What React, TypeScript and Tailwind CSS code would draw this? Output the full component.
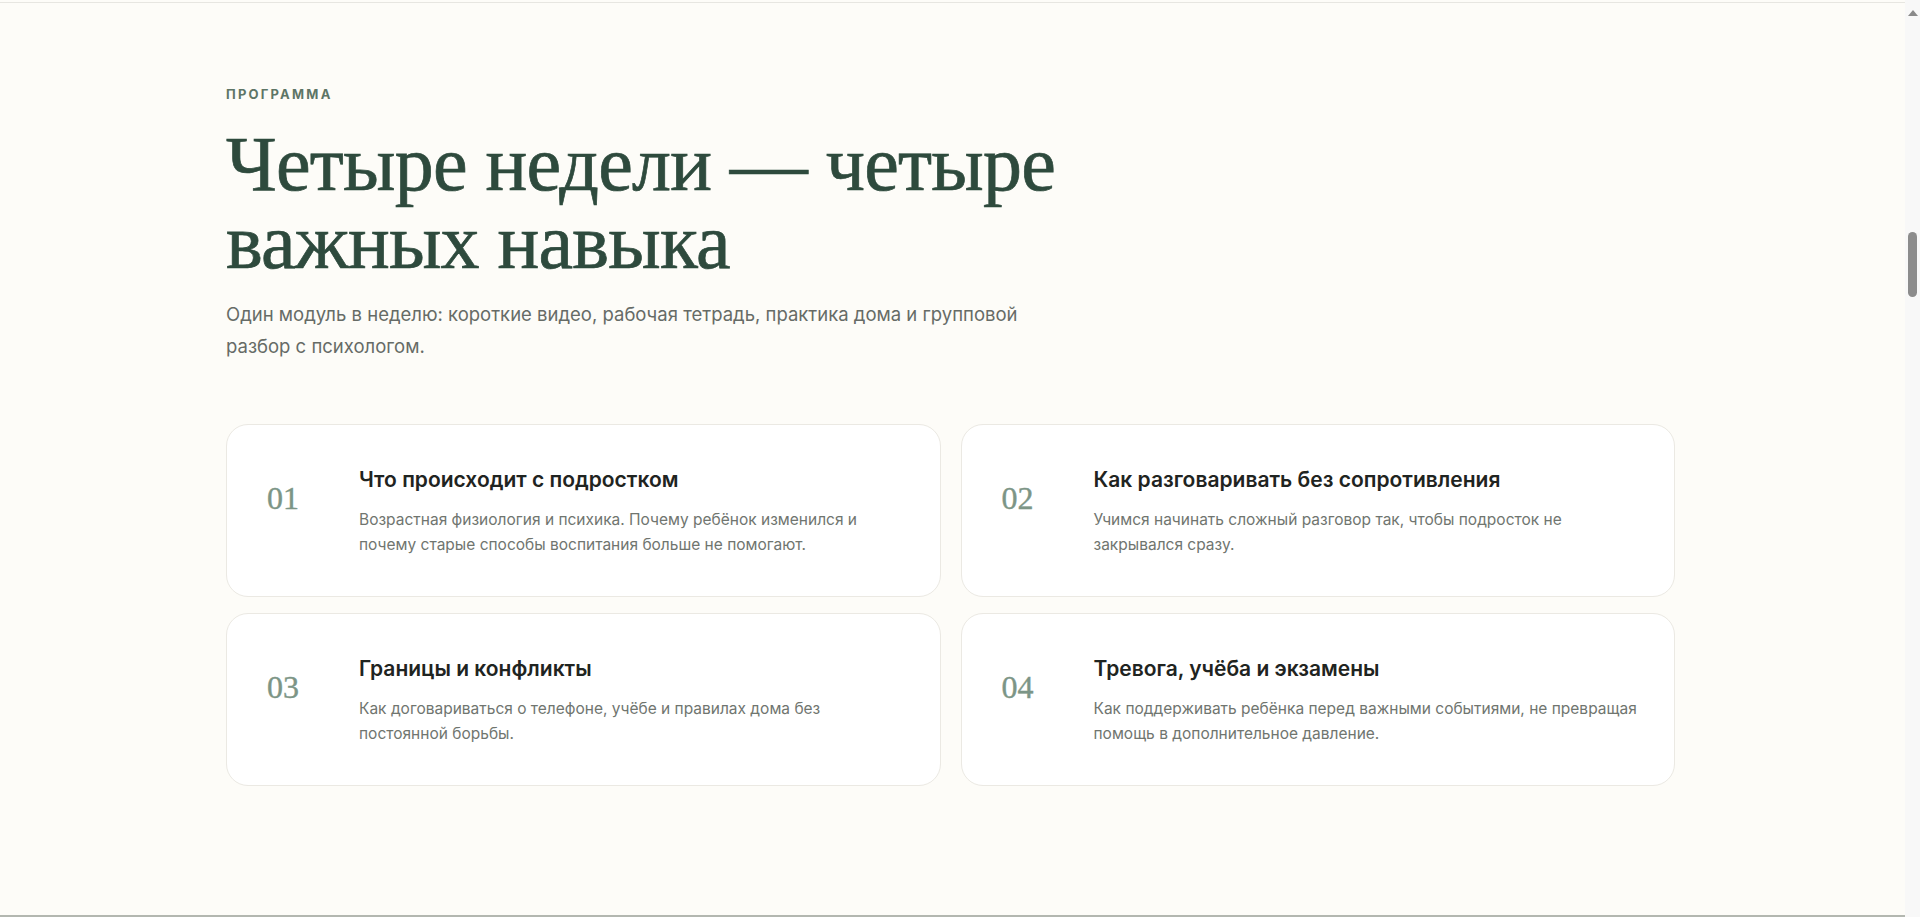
import React from 'react';

type Module = {
    num: string;
    title: string;
    text: string;
};

const modules: Module[] = [
    {
        num: '01',
        title: 'Что происходит с подростком',
        text: 'Возрастная физиология и психика. Почему ребёнок изменился и почему старые способы воспитания больше не помогают.',
    },
    {
        num: '02',
        title: 'Как разговаривать без сопротивления',
        text: 'Учимся начинать сложный разговор так, чтобы подросток не закрывался сразу.',
    },
    {
        num: '03',
        title: 'Границы и конфликты',
        text: 'Как договариваться о телефоне, учёбе и правилах дома без постоянной борьбы.',
    },
    {
        num: '04',
        title: 'Тревога, учёба и экзамены',
        text: 'Как поддерживать ребёнка перед важными событиями, не превращая помощь в дополнительное давление.',
    },
];

const sans = "font-['Inter','Noto_Sans',sans-serif]";
const serif = "font-['Liberation_Serif','DejaVu_Serif',serif]";

function ModuleCard({ item }: { item: Module }) {
    return (
        <div className="flex gap-8 rounded-[22px] border border-[#ebe9e3] bg-white pl-10 pr-8 pt-[41px] pb-[38px]">
            <div className={`${serif} mt-[16px] w-[60px] shrink-0 text-[32px] leading-[32px] text-[#7c9586] [-webkit-text-stroke:0.4px_#7c9586]`}>
                {item.num}
            </div>
            <div className="flex-1">
                <h3 className={`${sans} mb-[13px] text-[21px] font-semibold leading-7 text-[#1f2421]`}>
                    {item.title}
                </h3>
                <p className={`${sans} max-w-[548px] text-[15.5px] leading-[1.65] text-[#70756f]`}>{item.text}</p>
            </div>
        </div>
    );
}

function ScrollTrack() {
    return (
        <div className="flex w-[15px] shrink-0 flex-col items-center bg-[#f8f8f8]">
            <div className="mt-[10px] h-0 w-0 border-x-[5px] border-b-[6px] border-x-transparent border-b-[#8a8a8a]" />
            <div className="mt-[216px] h-[65px] w-[9px] rounded-full bg-[#8c8c8c]" />
        </div>
    );
}

export default function App() {
    return (
        <div className="flex h-[917px] w-full overflow-hidden bg-[#fdfcf8]">
            <div className="flex flex-1 flex-col">
                <div className="mt-[2px] border-t border-[#e7e6e1]" />

                <section className="flex-1 px-[226px] pt-[83px]">
                    <p className={`${sans} text-[13px] font-bold uppercase leading-4 tracking-[0.17em] text-[#5d7566]`}>
                        Программа
                    </p>
                    {/* wraps naturally after the first "четыре" */}
                    <h2 className={`${serif} mt-[23px] max-w-[880px] text-[78px] leading-[78px] tracking-[-0.01em] text-[#2e4a3d] [-webkit-text-stroke:0.7px_#2e4a3d]`}>
                        Четыре недели — четыре важных навыка
                    </h2>
                    <p className={`${sans} mt-[18px] max-w-[830px] text-[18.5px] leading-[1.72] text-[#666b66]`}>
                        Один модуль в неделю: короткие видео, рабочая тетрадь, практика дома и групповой разбор с психологом.
                    </p>

                    <div className="mt-[61px] grid max-w-[1449px] grid-cols-2 gap-x-5 gap-y-4">
                        {modules.map((m) => (
                            <ModuleCard key={m.num} item={m} />
                        ))}
                    </div>
                </section>

                <div className="h-[2px] bg-[#b3b7b0]" />
            </div>
            <ScrollTrack />
        </div>
    );
}
